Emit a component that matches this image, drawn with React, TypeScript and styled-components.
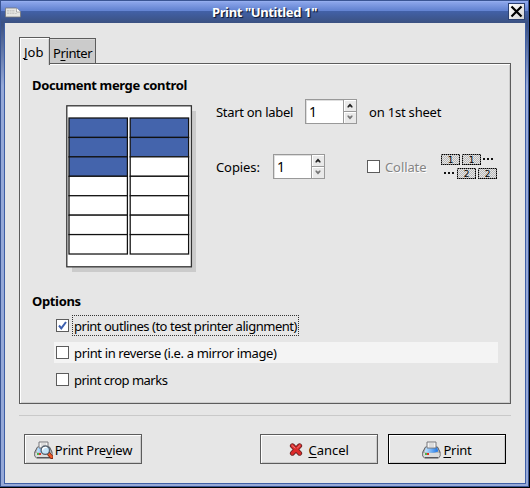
import React from "react";
import styled, { createGlobalStyle, css } from "styled-components";

const GlobalStyle = createGlobalStyle`
  *, *::before, *::after { box-sizing: border-box; }
  body { margin: 0; overflow: hidden; background: #000; }
`;

const Frame = styled.div`
  width: 530px;
  height: 488px;
  border: solid #000;
  border-width: 0 1px 1px 0;
  font: 13px/16px "Noto Sans", sans-serif;
  color: #000;
  user-select: none;
`;

const FrameEdge = styled.div`
  display: flex;
  flex-direction: column;
  height: 487px;
  border: 1px solid #3a5594;
  background: linear-gradient(#8eaaf0 0, #6585d4 10px, #3d5c9f 11px, #3c5283 24px, #96a9d8 85px);
`;

const TitleBar = styled.header`
  display: flex;
  align-items: center;
  flex: 0 0 22px;
  padding: 0 4px 0 4px;
  background: linear-gradient(#9db6f3 0, #8ba5ea 1px, #6484d2 9px, #6484d2 10px, #4261a8 10px, #3b5181 22px);
`;

const Title = styled.h1`
  flex: 1;
  margin: 0;
  font-size: 13px;
  line-height: 20px;
  letter-spacing: -0.38px;
  text-align: center;
  color: #fff;
  text-shadow: 1px 1px 1px #101c38, 1px 1px 0 #26375f;
`;

const CloseButton = styled.button`
  display: block;
  width: 17px;
  height: 17px;
  padding: 0;
  margin: 0 -1px 1px 0;
  border: 1px solid #2c4172;
  background: linear-gradient(135deg, #fff, #d4d4d4);
  svg { display: block; }
`;

const Client = styled.main`
  flex: 1;
  margin: 0 2px 2px 3px;
  border: solid #3f5fa6;
  border-width: 0 1px 1px;
  padding: 14px 14px 0;
  background: #e6e6e6;
`;

const Tabs = styled.nav`
  display: flex;
  align-items: flex-start;
  height: 26px;
`;

const Tab = styled.div<{ $active?: boolean }>`
  height: 26px;
  margin-top: 1px;
  padding: 5px 0 0 3px;
  width: 46px;
  border: 1px solid #5c5c5c;
  border-left: 0;
  background: #cbcbcb;
  box-shadow: inset 0 1px #d8d8d8;
  line-height: 18px;
  letter-spacing: -0.4px;
  ${p => p.$active && css`
    position: relative;
    height: 28px;
    width: 31px;
    margin-top: 0;
    padding: 5px 0 0 4px;
    border: 1px solid #5c5c5c;
    border-bottom: 0;
    background: #e6e6e6;
    box-shadow: inset 1px 1px #fff, inset -1px 0 #cfcfcf;
    letter-spacing: 0;
  `}
`;

const Mnemonic = styled.span`
  text-decoration: underline;
  text-decoration-thickness: 1px;
  text-underline-offset: 2px;
  text-decoration-skip-ink: none;
`;

const Panel = styled.section`
  width: 492px;
  height: 341px;
  padding: 12px 12px;
  border: 1px solid #5c5c5c;
  box-shadow: inset 1px 1px #fff, inset -1px -1px #cdcdcd;
`;

const Heading = styled.h2`
  margin: 0;
  font-size: 13px;
  line-height: 18px;
  letter-spacing: -0.35px;
`;

const MergeArea = styled.div`
  display: grid;
  grid-template-columns: 150px 1fr;
  height: 198px;
  padding: 11px 0 0 34px;
`;

const Controls = styled.div`
  display: flex;
  flex-direction: column;
  gap: 30px;
  margin-top: -6px;
`;

const ControlRow = styled.div`
  display: flex;
  align-items: center;
  height: 25px;
`;

const Label = styled.span<{ $width: number; $tracking: number }>`
  flex: none;
  width: ${p => p.$width}px;
  letter-spacing: ${p => p.$tracking}px;
  white-space: nowrap;
`;

const SpinBox = styled.div`
  display: grid;
  grid-template-columns: 37px 12px;
  column-gap: 1px;
  width: 52px;
  height: 25px;
  margin-right: 12px;
  border: 1px solid #999;
  background: #999;
`;

const SpinValue = styled.span`
  padding-left: 3px;
  background: #fff;
  box-shadow: inset 1px 1px #dedede;
  font-size: 14px;
  line-height: 23px;
`;

const SpinArrows = styled.div`
  display: grid;
  grid-template-rows: 11px 11px;
  row-gap: 1px;
`;

const SpinArrow = styled.span`
  display: grid;
  place-items: center;
  background: #e9e9e9;
  box-shadow: inset 1px 1px #fff;
  svg { display: block; }
`;

const CollateGroup = styled.div`
  display: flex;
  align-items: center;
  gap: 5px;
  margin-left: 30px;
  color: #858585;
  text-shadow: 1px 1px #fff;
`;

const CheckBox = styled.span`
  flex: none;
  display: grid;
  place-items: center;
  width: 13px;
  height: 13px;
  border: 1px solid #5c5c5c;
  background: #fff;
`;

const Options = styled.div`
  display: flex;
  flex-direction: column;
  gap: 6px;
  margin-top: 5px;
  padding-left: 22px;
`;

const OptionRow = styled.label<{ $hover?: boolean }>`
  display: flex;
  align-items: center;
  width: 444px;
  height: 21px;
  padding-left: 2px;
  background: ${p => (p.$hover ? "#f4f4f4" : "transparent")};
`;

const OptionText = styled.span<{ $focus?: boolean; $tracking: number }>`
  height: 21px;
  margin-left: 3px;
  padding: 0 0 0 1px;
  width: ${p => (p.$focus ? "227px" : "auto")};
  border: 1px dotted ${p => (p.$focus ? "#333" : "transparent")};
  line-height: 20px;
  letter-spacing: ${p => p.$tracking}px;
  white-space: nowrap;
`;

const Separator = styled.hr`
  height: 1px;
  margin: 11px 0 18px;
  border: 0;
  background: #c9c9c9;
`;

const Actions = styled.footer`
  display: flex;
  gap: 10px;
  padding: 0 5px;
`;

const ActionButton = styled.button<{ $default?: boolean; $first?: boolean; $tracking: number }>`
  display: flex;
  flex: none;
  align-items: center;
  justify-content: center;
  gap: 2px;
  width: 118px;
  height: 30px;
  margin: ${p => (p.$first ? "0 108px 0 0" : "0")};
  padding: 1px 0 0;
  border: 1px solid ${p => (p.$default ? "#000" : "#5c5c5c")};
  background: #e6e6e6;
  box-shadow: inset 1px 1px #fff, inset -1px -1px #cbcbcb;
  font: inherit;
  font-size: 13px;
  letter-spacing: ${p => p.$tracking}px;
  color: #000;
  white-space: nowrap;
  svg { flex: none; display: block; }
`;

const SheetNumber = styled.text`
  font: 9px "DejaVu Sans", sans-serif;
  text-anchor: middle;
  text-shadow: none;
  fill: #000;
`;

const DialogIcon = () => (
  <svg width="16" height="11" viewBox="0 0 16 11">
    <path d="M.5 1h11l4 4v5H.5z" fill="#e6e6e2" stroke="#77777a" strokeWidth=".8" />
    <path d="M11.500 1v4h4" fill="#fff" stroke="#888" strokeWidth=".6" />
    <path d="M2 3.5h8M2 5h8M2 6.5h10" stroke="#bbb" strokeWidth=".7" strokeDasharray="2 .6" />
  </svg>
);

const LabelSheet = () => {
  const cells = [];
  for (let col = 0; col < 2; col++)
    for (let row = 0; row < 7; row++)
      cells.push(
        <rect key={`${col}-${row}`} x={3 + col * 61.2} y={13 + row * 19.43} width="58.4" height="19.43"
          fill={row < 3 - col ? "#4464ac" : "#fff"} stroke="#111" strokeWidth="1.25" />
      );
  return (
    <svg width="131" height="168" viewBox="0 0 131 168">
      <rect x="6" y="6" width="124" height="161" fill="#cbcbcb" />
      <rect x=".8" y=".8" width="124.6" height="161" fill="#fff" stroke="#333" strokeWidth="1.3" />
      {cells}
    </svg>
  );
};

const Arrow = ({ down }: { down?: boolean }) => (
  <svg width="6" height="5" viewBox="0 0 6 5">
    {down
      ? <path d="M.5 .5h1.2L3 1.8 4.3.5h1.2v1.3L3 4.4.5 1.8z" fill="#777" />
      : <path d="M.5 4.5h1.2L3 3.2l1.3 1.3h1.2V3.2L3 .6.5 3.2z" fill="#222" />}
  </svg>
);

const sheets = [
  { x: 0, y: 0, n: 1 }, { x: 21, y: 0, n: 1 },
  { x: 16, y: 14, n: 2 }, { x: 37, y: 14, n: 2 },
];

const CollateIcon = () => (
  <svg width="57" height="25" viewBox="0 0 57 25" shapeRendering="crispEdges">
    <defs>
      <pattern id="stipple" width="2" height="2" patternUnits="userSpaceOnUse">
        <rect width="2" height="2" fill="#e6e6e6" />
        <rect width="1" height="1" fill="#b8b8b8" />
        <rect x="1" y="1" width="1" height="1" fill="#b8b8b8" />
      </pattern>
    </defs>
    {sheets.map(s => (
      <g key={`${s.x}-${s.y}`}>
        <rect x={s.x + 0.5} y={s.y + 0.5} width="18" height="10" fill="url(#stipple)" />
        <rect x={s.x + 0.5} y={s.y + 0.5} width="18" height="10" fill="none" stroke="#000" strokeDasharray="1 1" />
        <rect x={s.x + 0.5} y={s.y + 0.5} width="18" height="10" fill="none" stroke="#000" strokeOpacity=".45" />
        <SheetNumber x={s.x + 9.5} y={s.y + 9}>{s.n}</SheetNumber>
      </g>
    ))}
    <path d="M42 4h2v2h-2zM46 4h2v2h-2zM50 4h2v2h-2zM3 18h2v2H3zM7 18h2v2H7zM11 18h2v2h-2z" fill="#111" />
  </svg>
);

const PrinterIcon = ({ preview }: { preview?: boolean }) => (
  <svg width="19" height="18" viewBox="0 0 19 18">
    <defs>
      <linearGradient id="glow" x1="0" x2="1">
        <stop offset="0" stopColor="#c4e7ff" /><stop offset="1" stopColor="#1974e8" />
      </linearGradient>
    </defs>
    <path d="M3.5 6h12l2.5 5v4l-1.5 2h-14L.8 15v-4z" fill="#b9b9b9" stroke="#56565a" />
    <path d="M1.3 12h16.3v3l-1.3 1.5H2.7L1.3 15z" fill="#dcdcdc" />
    <path d="M4 6h11l1.2 4.5c-4 1.7-8.500 1.7-13.400.5z" fill="url(#glow)" />
    <path d="M5 1h9v6H5z" fill="#f5f5f5" stroke="#77777a" />
    <path d="M7 3h5M7 5h5" stroke="#c4c4c4" />
    <path d="M3 12h2v2H3z" fill="#46b54c" /><path d="M5 12h2v2H5z" fill="#e03423" />
    <path d="M3 16.500h13" stroke="#55555a" />
    {preview && (
      <g>
        <path d="M14.500 12.500l3.200 3.700" stroke="#77230d" strokeWidth="3.800" strokeLinecap="round" />
        <path d="M14.700 12.700l2.800 3.200" stroke="#f05a28" strokeWidth="2.400" strokeLinecap="round" />
        <circle cx="11.300" cy="9.200" r="4.200" fill="#c4e3f8" stroke="#56606c" strokeWidth="1.300" />
        <path d="M8.500 9.500a3 3 0 0 1 4.300-2.800" fill="none" stroke="#fff" strokeWidth="1.300" />
      </g>
    )}
  </svg>
);

const CancelIcon = () => (
  <svg width="14" height="13" viewBox="0 0 14 13">
    <path d="M3.400 2.800L10.600 10.200M10.600 2.800L3.400 10.200" stroke="#6b2525" strokeWidth="5" strokeLinecap="round" />
    <path d="M3.400 2.800L10.600 10.200M10.600 2.800L3.400 10.200" stroke="#dc2b2b" strokeWidth="3.300" strokeLinecap="round" />
    <path d="M3 2.500L6 5M11 2.500L8.500 4.800" stroke="#f28080" strokeLinecap="round" />
  </svg>
);

const SpinField = ({ value }: { value: number }) => (
  <SpinBox>
    <SpinValue>{value}</SpinValue>
    <SpinArrows>
      <SpinArrow><Arrow /></SpinArrow>
      <SpinArrow><Arrow down /></SpinArrow>
    </SpinArrows>
  </SpinBox>
);

const options = [
  { text: "print outlines (to test printer alignment)", checked: true, tracking: -0.475 },
  { text: "print in reverse (i.e. a mirror image)", hover: true, tracking: -0.36 },
  { text: "print crop marks", tracking: -0.5 },
];

export default function App() {
  return (
    <Frame>
      <GlobalStyle />
      <FrameEdge>
        <TitleBar>
          <DialogIcon />
          <Title>Print "Untitled 1"</Title>
          <CloseButton aria-label="Close">
            <svg width="15" height="15" viewBox="0 0 15 15">
              <path d="M2.500 2.500l10 10M12.500 2.500l-10 10" stroke="#000" strokeWidth="2.200" />
            </svg>
          </CloseButton>
        </TitleBar>
        <Client>
          <Tabs>
            <Tab $active><Mnemonic>J</Mnemonic>ob</Tab>
            <Tab>P<Mnemonic>r</Mnemonic>inter</Tab>
          </Tabs>
          <Panel>
            <Heading>Document merge control</Heading>
            <MergeArea>
              <LabelSheet />
              <Controls>
                <ControlRow>
                  <Label $width={89} $tracking={-0.3}>Start on label</Label>
                  <SpinField value={1} />
                  <Label $width={80} $tracking={-0.2}>on 1st sheet</Label>
                </ControlRow>
                <ControlRow>
                  <Label $width={57} $tracking={-0.1}>Copies:</Label>
                  <SpinField value={1} />
                  <CollateGroup>
                    <CheckBox />
                    <Label $width={51} $tracking={-0.1}>Collate</Label>
                    <CollateIcon />
                  </CollateGroup>
                </ControlRow>
              </Controls>
            </MergeArea>
            <Heading>Options</Heading>
            <Options>
              {options.map(o => (
                <OptionRow key={o.text} $hover={o.hover}>
                  <CheckBox>
                    {o.checked && (
                      <svg width="9" height="9" viewBox="0 0 9 9">
                        <path d="M1 4.500l2.300 2.800L8 1" fill="none" stroke="#3d5fae" strokeWidth="2" />
                      </svg>
                    )}
                  </CheckBox>
                  <OptionText $focus={o.checked} $tracking={o.tracking}>{o.text}</OptionText>
                </OptionRow>
              ))}
            </Options>
          </Panel>
          <Separator />
          <Actions>
            <ActionButton $first $tracking={-0.2}>
              <PrinterIcon preview />
              <span>Print Pre<Mnemonic>v</Mnemonic>iew</span>
            </ActionButton>
            <ActionButton $tracking={0}>
              <CancelIcon />
              <span>&nbsp;<Mnemonic>C</Mnemonic>ancel</span>
            </ActionButton>
            <ActionButton $default $tracking={-0.25}>
              <PrinterIcon />
              <span><Mnemonic>P</Mnemonic>rint</span>
            </ActionButton>
          </Actions>
        </Client>
      </FrameEdge>
    </Frame>
  );
}
